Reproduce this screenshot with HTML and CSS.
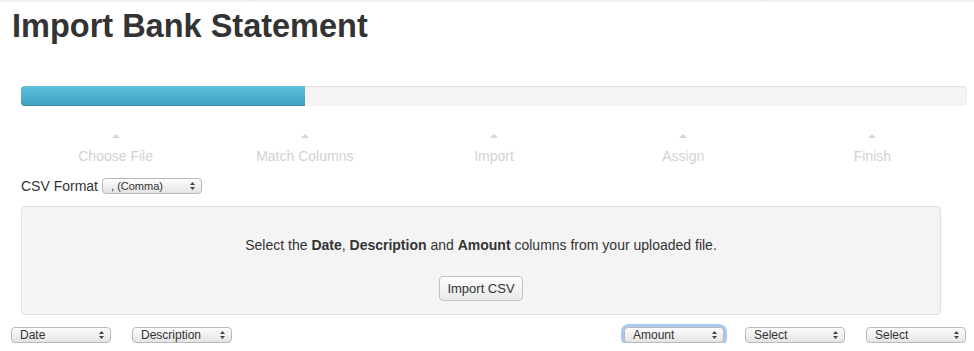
FILE: index.html
```html
<!DOCTYPE html>
<html lang="en">
<head>
  <meta charset="UTF-8" />
  <title>Import Bank Statement</title>
  <link rel="stylesheet" href="styles.css">
</head>
<body>

  <h1>Import Bank Statement</h1>

  <div class="progress">
    <div class="bar" style="width: 30%"></div>
  </div>

  <div class="steps">
    <div class="step"><span class="tick"></span><p>Choose File</p></div>
    <div class="step"><span class="tick"></span><p>Match Columns</p></div>
    <div class="step"><span class="tick"></span><p>Import</p></div>
    <div class="step"><span class="tick"></span><p>Assign</p></div>
    <div class="step"><span class="tick"></span><p>Finish</p></div>
  </div>

  <div class="format-row">
    <label for="csvFormat">CSV Format</label>
    <span class="select-wrap">
      <select id="csvFormat" class="select">
        <option>, (Comma)</option>
        <option>; (Semicolon)</option>
        <option>Tab</option>
      </select>
      <svg class="arrows" width="5" height="8" viewBox="0 0 5 8"><path d="M2.5 0L5 3H0z M2.5 8L5 5H0z" fill="#444"/></svg>
    </span>
  </div>

  <div class="panel">
    <p>Select the <b>Date</b>, <b>Description</b> and <b>Amount</b> columns from your uploaded file.</p>
    <button class="btn">Import CSV</button>
  </div>

  <div class="columns">
    <div class="col-group">
      <span class="select-wrap">
        <select class="select col-select"><option>Date</option></select>
        <svg class="arrows" width="5" height="8" viewBox="0 0 5 8"><path d="M2.5 0L5 3H0z M2.5 8L5 5H0z" fill="#444"/></svg>
      </span>
      <span class="select-wrap">
        <select class="select col-select"><option>Description</option></select>
        <svg class="arrows" width="5" height="8" viewBox="0 0 5 8"><path d="M2.5 0L5 3H0z M2.5 8L5 5H0z" fill="#444"/></svg>
      </span>
    </div>
    <div class="col-group">
      <span class="select-wrap focused">
        <select class="select col-select"><option>Amount</option></select>
        <svg class="arrows" width="5" height="8" viewBox="0 0 5 8"><path d="M2.5 0L5 3H0z M2.5 8L5 5H0z" fill="#444"/></svg>
      </span>
      <span class="select-wrap">
        <select class="select col-select"><option>Select</option></select>
        <svg class="arrows" width="5" height="8" viewBox="0 0 5 8"><path d="M2.5 0L5 3H0z M2.5 8L5 5H0z" fill="#444"/></svg>
      </span>
      <span class="select-wrap">
        <select class="select col-select"><option>Select</option></select>
        <svg class="arrows" width="5" height="8" viewBox="0 0 5 8"><path d="M2.5 0L5 3H0z M2.5 8L5 5H0z" fill="#444"/></svg>
      </span>
    </div>
  </div>

</body>
</html>
```

FILE: styles.css
```css
* { box-sizing: border-box; margin: 0; padding: 0; }
body {
  font-family: "Liberation Sans", Arial, sans-serif;
  font-size: 14px;
  color: #333;
  background: #fff linear-gradient(#ececec, #fff 3px) no-repeat;
}

h1 {
  margin: 8px 12px 0;
  font-size: 32.5px;
  line-height: 36px;
  font-weight: bold;
  color: #333;
}

/* Progress */
.progress {
  margin: 42px 7px 0 21px;
  height: 20px;
  background: #f5f5f5;
  border-radius: 4px;
  box-shadow: inset 0 1px 2px rgba(0,0,0,0.1);
  overflow: hidden;
}
.progress .bar {
  height: 100%;
  background: linear-gradient(#5fc2df, #3ba1bf);
  box-shadow: inset 0 -1px 0 rgba(0,0,0,0.15);
}

.steps {
  display: flex;
  margin: 28px 7px 0 21px;
}
.step { flex: 1; text-align: center; }
.tick {
  display: block;
  width: 0;
  height: 0;
  margin: 0 auto;
  border-left: 4px solid transparent;
  border-right: 4px solid transparent;
  border-bottom: 4px solid #d4d4d4;
}
.step p {
  margin-top: 8px;
  line-height: 20px;
  color: #d2d2d2;
}

/* Selects */
.format-row {
  display: flex;
  align-items: center;
  gap: 4px;
  margin: 10px 0 0 21px;
  line-height: 20px;
}
.select-wrap {
  position: relative;
  display: inline-block;
  border-radius: 5px;
}
.select {
  appearance: none;
  -webkit-appearance: none;
  display: block;
  width: 100px;
  height: 16px;
  padding: 0 18px 0 8px;
  font-family: "Liberation Sans", Arial, sans-serif;
  font-size: 11px;
  line-height: 14px;
  color: #333;
  background: linear-gradient(#fdfdfd, #e4e4e4);
  border: 1px solid #b9b9b9;
  border-radius: 4px;
  outline: none;
}
.arrows {
  position: absolute;
  right: 7px;
  top: 4px;
  pointer-events: none;
}
.focused { box-shadow: 0 0 0 3px #a9c9f2; }

/* Panel */
.panel {
  margin: 10px 33px 0 21px;
  padding: 28px 0 13px;
  background: #f4f4f4;
  border: 1px solid #e1e1e1;
  border-radius: 4px;
  text-align: center;
}
.panel p {
  line-height: 20px;
  margin-bottom: 21px;
}
.btn {
  width: 84px;
  height: 25px;
  font-family: "Liberation Sans", Arial, sans-serif;
  font-size: 13px;
  color: #333;
  background: linear-gradient(#fff, #e8e8e8);
  border: 1px solid #c4c4c4;
  border-radius: 4px;
  cursor: pointer;
}

.columns {
  display: flex;
  justify-content: space-between;
  margin-top: 12px;
  padding: 0 8px 0 11px;
}
.col-group { display: flex; gap: 21px; }
.col-select { font-size: 12px; }
```
